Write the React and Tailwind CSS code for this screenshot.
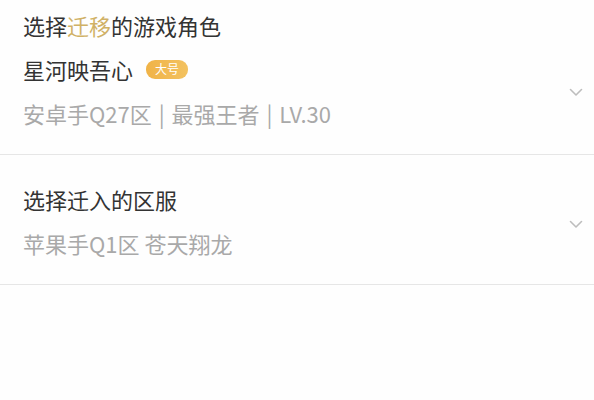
export default function App() {
  const font = { fontFamily: '"Noto Sans CJK SC", "Noto Sans", sans-serif' };
  const Chevron = () => (
    <svg width="14" height="9" viewBox="0 0 14 9" fill="none">
      <path d="M1.5 1.5 L7 7 L12.5 1.5" stroke="#bdbdbd" strokeWidth="1.6" strokeLinecap="round" strokeLinejoin="round" />
    </svg>
  );
  return (
    <div className="w-[594px] h-[400px] bg-[#fefefe] overflow-hidden" style={font}>
      <div className="pt-[3px] pb-[19px] border-b border-[#e6e6e6]">
        <div className="pl-[23px] h-[44px] flex items-center text-[22px] text-[#333333]">
          选择<span className="text-[#d0b165]">迁移</span>的游戏角色
        </div>
        <div className="flex items-center">
          <div className="flex-1 pl-[23px]">
            <div className="h-[44px] flex items-center text-[22px] text-[#333333]">
              星河映吾心
              <span className="ml-[13px] w-[42px] h-[19px] rounded-[9px] bg-gradient-to-r from-[#f0b347] to-[#f3c260] text-white text-[12px] leading-none flex items-center justify-center">
                大号
              </span>
            </div>
            <div className="h-[44px] flex items-center text-[22px] text-[#a9a9a9] whitespace-pre">
              安卓手Q27区<span className="px-[2px]"> | </span>最强王者<span className="px-[2px]"> | </span>LV.30
            </div>
          </div>
          <div className="pr-[11px] pt-[3px]">
            <Chevron />
          </div>
        </div>
      </div>
      <div className="pt-[22px] pb-[19px] border-b border-[#e6e6e6] flex items-center">
        <div className="flex-1 pl-[23px]">
          <div className="h-[44px] flex items-center text-[22px] text-[#333333]">选择迁入的区服</div>
          <div className="h-[44px] flex items-center text-[22px] text-[#a9a9a9]">苹果手Q1区 苍天翔龙</div>
        </div>
        <div className="pr-[11px] pt-[7px]">
          <Chevron />
        </div>
      </div>
    </div>
  );
}
